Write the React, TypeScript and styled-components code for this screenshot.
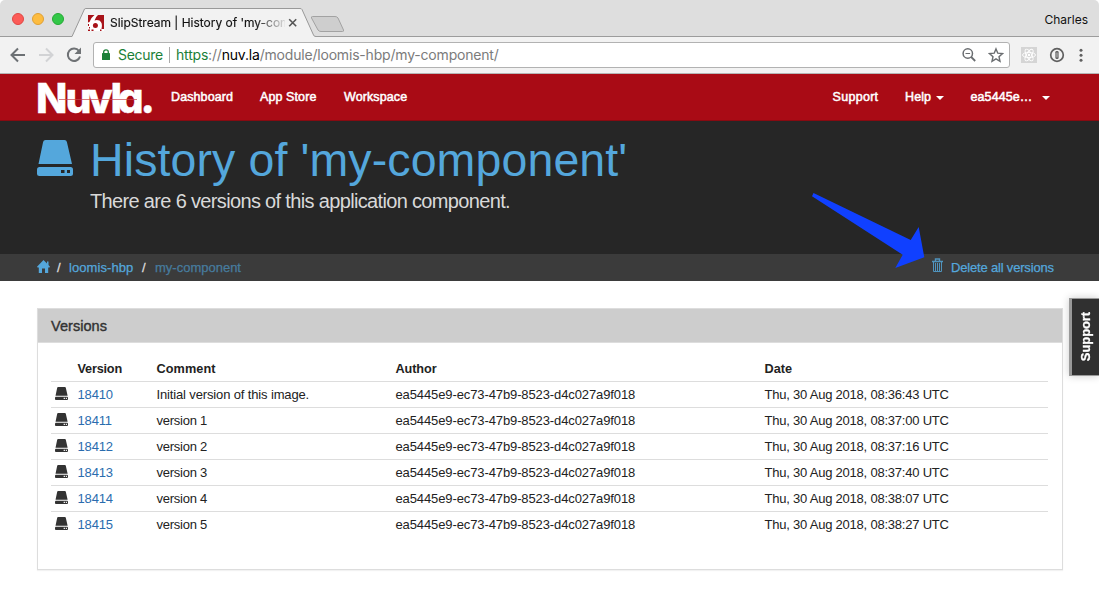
import React from 'react';
import styled, { createGlobalStyle } from 'styled-components';

const GlobalStyle = createGlobalStyle`
  * { box-sizing: border-box; }
  body { margin: 0; background: #fff; font-family: "Liberation Sans", Arial, sans-serif; }
  #root { width: 1099px; height: 592px; overflow: hidden; }
`;

const Page = styled.div`
  position: relative;
  width: 1099px;
  height: 592px;
  background: #fff;
  color: #333;
  font-size: 13px;
  white-space: nowrap;
`;

/* browser chrome */
const TabStrip = styled.div`
  display: flex;
  height: 37px;
  background: #dedede;
  border-bottom: 1px solid #9c9c9c;
  border-radius: 5px 5px 0 0;
  font-family: Inter, sans-serif;
  color: #111;
`;
const Lights = styled.div`
  display: flex;
  gap: 8px;
  width: 72px;
  padding: 13px 0 0 12px;
`;
const Light = styled.i<{ $c: string; $b: string }>`
  width: 12px;
  height: 12px;
  border-radius: 50%;
  background: ${p => p.$c};
  border: 1px solid ${p => p.$b};
`;
const Tab = styled.div`
  position: relative;
  width: 243px;
  height: 37px;
`;
const TabShape = styled.svg`
  position: absolute;
  left: 0;
  top: 0;
  overflow: visible;
`;
const TabContent = styled.div`
  position: relative;
  display: flex;
  align-items: center;
  height: 30px;
  margin: 8px 0 0 16px;
`;
const TabTitle = styled.span`
  width: 175px;
  margin: -2px 3px 0 6px;
  overflow: hidden;
  font-size: 12px;
  letter-spacing: -0.02px;
  -webkit-text-stroke: 0.15px #111;
  mask-image: linear-gradient(90deg, #000 145px, transparent 178px);
`;
const NewTab = styled.svg`
  margin: 15px 0 0 -5px;
`;
const Profile = styled.span`
  margin-left: auto;
  padding: 12px 11px 0 0;
  font-size: 12px;
  line-height: 16px;
`;
const Toolbar = styled.div`
  display: flex;
  align-items: center;
  height: 37px;
  padding: 0 14px 0 9px;
  background: #f2f2f2;
  border-bottom: 1px solid #b5b5b5;
`;
const NavIcons = styled.div`
  display: flex;
  gap: 10px;
  width: 84px;
`;
const Address = styled.div`
  display: flex;
  align-items: center;
  width: 917px;
  height: 26px;
  padding: 0 5px 0 7px;
  background: #fff;
  border: 1px solid #b2b2b2;
  border-radius: 3px;
  font: 14px Inter, sans-serif;
  color: #7b7b7b;
`;
const Secure = styled.span`
  width: 45px;
  margin-left: 7px;
  padding-right: 6px;
  box-sizing: content-box;
  line-height: 16px;
  border-right: 1px solid #aaa;
  color: #1a8038;
  letter-spacing: -0.3px;
`;
const Url = styled.span`
  margin: -1px 0 0 6px;
  letter-spacing: -0.19px;
`;
const Scheme = styled.span`color: #1a8038;`;
const Host = styled.span`color: #000;`;
const AddressActions = styled.div`
  display: flex;
  gap: 11px;
  margin-left: auto;
`;
const Extensions = styled.div`
  display: flex;
  align-items: center;
  gap: 12px;
  margin-left: 11px;
`;

/* application header */
const Navbar = styled.nav`
  display: flex;
  height: 47px;
  padding: 0 49px 0 37px;
  background: #a90b15;
  border-bottom: 1px solid #870a11;
`;
const Logo = styled.svg`
  width: 120px;
  height: 46px;
  overflow: visible;
`;
const LogoText = styled.text`
  font: 800 41px Inter, sans-serif;
  font-feature-settings: "cv11";
  fill: #fff;
  stroke: #fff;
  stroke-width: 0.4px;
`;
const NavLink = styled.a<{ $left: number; $w: number; $ls?: number }>`
  margin: 15px 0 0 ${p => p.$left}px;
  width: ${p => p.$w}px;
  height: 16px;
  line-height: 16px;
  font-size: 12.5px;
  letter-spacing: ${p => p.$ls ?? 0.1}px;
  color: #fff;
  -webkit-text-stroke: 0.5px #fff;
`;
const Right = styled.div`
  display: flex;
  margin-left: auto;
`;
const Caret = styled.i`
  margin: 22px 0 0;
  width: 8px;
  height: 4px;
  border: 4px solid transparent;
  border-top-color: #fff;
  border-bottom: 0;
`;
const Hero = styled.header`
  display: flex;
  height: 133px;
  padding: 19px 0 0 37px;
  background: #262626;
`;
const HeroText = styled.div`margin-left: 14px;`;
const Title = styled.h1`
  margin: -7px 0 0 3px;
  font-size: 46.5px;
  line-height: 54px;
  font-weight: 400;
  letter-spacing: 0.11px;
  color: #54a7dc;
`;
const Subtitle = styled.p`
  margin: 1px 0 0 3px;
  font-size: 20px;
  line-height: 26px;
  letter-spacing: -0.66px;
  color: #d9d9d9;
`;
const Crumbs = styled.div`
  display: flex;
  align-items: center;
  height: 27px;
  padding: 0 45px 0 37px;
  background: #3b3b3b;
  color: #54a7dc;
`;
const HomeIcon = styled.svg`margin-bottom: 3px;`;
const Crumb = styled.span<{ $dim?: boolean; $w: number; $ls?: number }>`
  width: ${p => p.$w}px;
  letter-spacing: ${p => p.$ls ?? 0}px;
  color: ${p => (p.$dim ? '#477c9e' : '#54a7dc')};
  -webkit-text-stroke: 0.25px currentColor;
`;
const Slash = styled.span<{ $l: number; $r: number }>`
  margin: 0 ${p => p.$r}px 0 ${p => p.$l}px;
  width: 5px;
  color: #ddd;
  -webkit-text-stroke: 0.3px #ddd;
`;
const DeleteAll = styled.a`
  display: flex;
  align-items: center;
  gap: 7px;
  margin-left: auto;
`;
const TrashIcon = styled.svg`margin-bottom: 4px;`;

/* versions panel */
const Main = styled.main`padding: 27px 36px 0 37px;`;
const Panel = styled.section`
  height: 262px;
  border: 1px solid #ddd;
  box-shadow: 0 1px 1px rgba(0, 0, 0, 0.05);
`;
const PanelHead = styled.h2`
  margin: 0;
  height: 34px;
  padding: 0 13px;
  line-height: 35px;
  font-size: 14.5px;
  font-weight: 400;
  letter-spacing: 0.05px;
  background: #cdcdcd;
  border-bottom: 1px solid #ddd;
  -webkit-text-stroke: 0.4px #333;
`;
const Table = styled.div`padding: 13px 14px 0 13px;`;
const Row = styled.div<{ $head?: boolean; $last?: boolean }>`
  display: grid;
  grid-template-columns: 26.5px 79px 239px 369px 1fr;
  align-items: center;
  height: 26px;
  border-bottom: 1px solid ${p => (p.$last ? 'transparent' : '#ddd')};
  font-weight: ${p => (p.$head ? 700 : 400)};
  font-size: ${p => (p.$head ? 12.7 : 13)}px;
`;
const Disk = styled.span`padding: 0 0 2px 4px; line-height: 0;`;
const VersionLink = styled.a`
  color: #2a6cae;
  letter-spacing: -0.15px;
`;
const Cell = styled.span<{ $ls?: number }>`
  color: #222;
  letter-spacing: ${p => p.$ls ?? 0}px;
`;

/* overlays */
const SupportTab = styled.aside`
  position: absolute;
  right: 0;
  top: 298px;
  display: flex;
  align-items: center;
  justify-content: center;
  width: 30px;
  height: 78px;
  background: #303030;
  border: 1px solid #999;
  border-left: 3px solid #999;
  border-right: 0;
  box-shadow: 0 0 8px rgba(0, 0, 0, 0.2);
`;
const SupportText = styled.span`
  writing-mode: vertical-rl;
  transform: rotate(180deg);
  font-weight: 700;
  font-size: 13px;
  letter-spacing: -0.1px;
  color: #fff;
  -webkit-text-stroke: 0.3px #fff;
`;
const Pointer = styled.svg`
  position: absolute;
  left: 810px;
  top: 190px;
`;

const HddIcon = ({ size, color, hole }: { size: number; color: string; hole: string }) => (
  <svg width={size} height={size} viewBox="0 0 36 36">
    <path d="M8.500 0h19q2 0 2.400 2L35 24H1.500L6.100 2Q6.500 0 8.500 0z" fill={color} />
    <rect y="27" width="36" height="9" rx="2.500" fill={color} />
    <path d="M24 30h3.500v3H24zM30 30h3v3h-3z" fill={hole} />
  </svg>
);

const versions = [
  ['18410', 'Initial version of this image.', '08:36:43'],
  ['18411', 'version 1', '08:37:00'],
  ['18412', 'version 2', '08:37:16'],
  ['18413', 'version 3', '08:37:40'],
  ['18414', 'version 4', '08:38:07'],
  ['18415', 'version 5', '08:38:27'],
];

export default function App() {
  return (
    <Page>
      <GlobalStyle />
      <TabStrip>
        <Lights>
          <Light $c="#fc5b57" $b="#df4744" />
          <Light $c="#fdbc40" $b="#dfa035" />
          <Light $c="#33c748" $b="#25a934" />
        </Lights>
        <Tab>
          <TabShape width="243" height="37">
            <path d="M0 36.500L12.500 9Q13 8.500 14 8.500H228Q229.500 8.500 230 9.500L241.500 35Q242 36.500 244 36.500V38H0z" fill="#f2f2f2" />
            <path d="M0 36.500L12.500 9Q13 8.500 14 8.500H228Q229.500 8.500 230 9.500L241.500 35Q242 36.500 244 36.500" fill="none" stroke="#999" />
          </TabShape>
          <TabContent>
            <svg width="16" height="16" viewBox="0 0 16 16">
              <path d="M0 0h16v16H0z" fill="#fff" />
              <path d="M0 0h6.500Q2.500 3 1.500 7L0 7.500zM10 0h6v14h-2.500Q15 8 11.500 5.600 9 4.500 6.500 5.400 7.500 2 10 0z" fill="#a81319" />
              <circle cx="7.400" cy="10.400" r="2.500" fill="#a81319" />
              <path d="M0 9h1v2H0zM1 12h1v1.500H1zM0 14.500h2V16H0zM3.500 14.500h2V16h-2zM12 14.500h1.500V16H12z" fill="#a81319" />
            </svg>
            <TabTitle>SlipStream | History of 'my-component'</TabTitle>
            <svg width="10" height="10" viewBox="0 0 10 10">
              <path d="M1.200 1.200l7 7M8.200 1.200l-7 7" stroke="#555" strokeWidth="1.600" />
            </svg>
          </TabContent>
        </Tab>
        <NewTab width="36" height="19">
          <path d="M2.500 1.500H25Q27 1.500 28 3L33.500 15Q34 16.500 32.500 16.500H11Q9 16.500 8 15L1.500 3Q1 1.500 2.500 1.500z" fill="#cecece" stroke="#a2a2a2" />
        </NewTab>
        <Profile>Charles</Profile>
      </TabStrip>
      <Toolbar>
        <NavIcons>
          <svg width="18" height="18" viewBox="0 0 18 18"><path d="M9 2.500L2.500 9 9 15.500M2.500 9H16" fill="none" stroke="#6c7074" strokeWidth="2" /></svg>
          <svg width="18" height="18" viewBox="0 0 18 18"><path d="M9 2.500L15.500 9 9 15.500M15.500 9H2" fill="none" stroke="#d2d3d5" strokeWidth="2" /></svg>
          <svg width="18" height="18" viewBox="0 0 18 18"><path d="M14 5A6.200 6.200 0 1 0 15 10.500" fill="none" stroke="#6f7275" strokeWidth="2" /><path d="M16 1.500v6.500H9.500z" fill="#6f7275" /></svg>
        </NavIcons>
        <Address>
          <svg width="10" height="12" viewBox="0 0 10 12">
            <rect x="1" y="4" width="8" height="7" rx=".6" fill="#1a8038" />
            <path d="M2.700 5V3Q2.700.900 5 .900T7.300 3V5" fill="none" stroke="#1a8038" strokeWidth="1.300" />
          </svg>
          <Secure>Secure</Secure>
          <Url><Scheme>https</Scheme>://<Host>nuv.la</Host>/module/loomis-hbp/my-component/</Url>
          <AddressActions>
            <svg width="16" height="16" viewBox="0 0 16 16" fill="none" stroke="#6a6d70"><circle cx="6.800" cy="6.500" r="4.700" strokeWidth="1.500" /><path d="M10.200 10l4 4" strokeWidth="1.800" /><path d="M4.500 6.500h4.600" strokeWidth="1" /></svg>
            <svg width="16" height="16" viewBox="0 0 16 16"><path d="M8 1.900l1.800 4.300 4.700.4-3.500 3.100 1 4.600L8 11.900l-4 2.400 1-4.600-3.500-3.100 4.700-.4z" fill="none" stroke="#6a6d70" strokeWidth="1.400" /></svg>
          </AddressActions>
        </Address>
        <Extensions>
          <svg width="16" height="16" viewBox="0 0 16 16"><path d="M0 0h16v16H0z" fill="#d5d5d5" /><g fill="none" stroke="#fff" strokeWidth=".9"><ellipse cx="8" cy="8" rx="6.500" ry="2.600" /><ellipse cx="8" cy="8" rx="6.500" ry="2.600" transform="rotate(60 8 8)" /><ellipse cx="8" cy="8" rx="6.500" ry="2.600" transform="rotate(120 8 8)" /></g><circle cx="8" cy="8" r="1.200" fill="#fff" /></svg>
          <svg width="16" height="16" viewBox="0 0 16 16"><circle cx="8" cy="8" r="6.300" fill="none" stroke="#606060" strokeWidth="1.700" /><rect x="6.400" y="4" width="3.200" height="8" rx="1.200" fill="#606060" /><path d="M8 5.500v5" stroke="#ddd" strokeWidth=".8" /></svg>
          <svg width="8" height="16" viewBox="0 0 8 16" fill="#606060"><circle cx="4" cy="3.200" r="1.500" /><circle cx="4" cy="8.200" r="1.500" /><circle cx="4" cy="13.200" r="1.500" /></svg>
        </Extensions>
      </Toolbar>
      <Navbar>
        <Logo viewBox="0 0 120 46">
          <LogoText x="-1 28.500 50.500 73.500 80.500 103.500" y="39">Nuvla.</LogoText>
          <path d="M22 25.500H100" stroke="#c8454c" strokeWidth=".7" />
        </Logo>
        <NavLink $left={14} $w={62}>Dashboard</NavLink>
        <NavLink $left={27} $w={57}>App Store</NavLink>
        <NavLink $left={27} $w={64}>Workspace</NavLink>
        <Right>
          <NavLink $left={0} $w={46} $ls={0.3}>Support</NavLink>
          <NavLink $left={26.5} $w={31}>Help</NavLink>
          <Caret />
          <NavLink $left={26.500} $w={71.500}>ea5445e…</NavLink>
          <Caret />
        </Right>
      </Navbar>
      <Hero>
        <HddIcon size={36} color="#54a7dc" hole="#262626" />
        <HeroText>
          <Title>History of 'my-component'</Title>
          <Subtitle>There are 6 versions of this application component.</Subtitle>
        </HeroText>
      </Hero>
      <Crumbs>
        <HomeIcon width="13" height="13" viewBox="0 0 13 13"><path d="M6.500 0L10 3.400V1.500h1.500V5L13 6.700 12.400 7.500H11.200V13H8V8.500H5V13H1.800V7.500H.6L0 6.700z" fill="#54a7dc" /></HomeIcon>
        <Slash $l={7} $r={7}>/</Slash>
        <Crumb $w={65} $ls={0.08}>loomis-hbp</Crumb>
        <Slash $l={8} $r={8}>/</Slash>
        <Crumb $dim $w={90}>my-component</Crumb>
        <DeleteAll>
          <TrashIcon width="13" height="15" viewBox="0 0 13 15" fill="none" stroke="#4f93bd"><path d="M1 3.500h11M4.500 3V1h4v2" strokeWidth="1.400" /><path d="M2.500 4v9.500h8V4M4.500 5v8M6.500 5v8M8.500 5v8" /></TrashIcon>
          <Crumb $w={103} $ls={-0.18}>Delete all versions</Crumb>
        </DeleteAll>
      </Crumbs>
      <Main>
        <Panel>
          <PanelHead>Versions</PanelHead>
          <Table>
            <Row $head><span /><Cell $ls={-0.2}>Version</Cell><Cell $ls={0.08}>Comment</Cell><Cell $ls={-0.1}>Author</Cell><Cell>Date</Cell></Row>
            {versions.map(([id, comment, time], i) => (
              <Row key={id} $last={i === versions.length - 1}>
                <Disk><HddIcon size={13} color="#333" hole="#fff" /></Disk>
                <VersionLink>{id}</VersionLink>
                <Cell $ls={i === 0 ? -0.14 : -0.25}>{comment}</Cell>
                <Cell $ls={-0.11}>ea5445e9-ec73-47b9-8523-d4c027a9f018</Cell>
                <Cell $ls={-0.22}>Thu, 30 Aug 2018, {time} UTC</Cell>
              </Row>
            ))}
          </Table>
        </Panel>
      </Main>
      <SupportTab><SupportText>Support</SupportText></SupportTab>
      <Pointer width="116" height="80"><path d="M3.500 3l97.200 47 8-13 5.600 30.300L85.300 78l7.400-13.300L2 6.300z" fill="#1040ff" /></Pointer>
    </Page>
  );
}
